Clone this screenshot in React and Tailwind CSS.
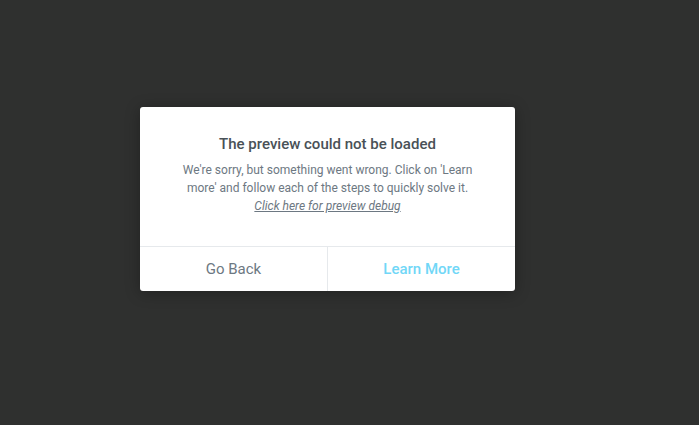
export default function App() {
  return (
    <div
      className="w-[699px] h-[425px] bg-[#2f302f] flex items-start pl-[140px] pt-[107px]"
      style={{ fontFamily: "Roboto, 'Liberation Sans', sans-serif" }}
    >
      <div className="w-[375px] bg-white rounded-[3px] shadow-[0_2px_15px_rgba(0,0,0,0.3)] overflow-hidden">
        <div className="px-[40px] pt-[27px] pb-[31px] text-center">
          <h2 className="text-[15px] leading-[20px] font-medium text-[#495157]">
            The preview could not be loaded
          </h2>
          <p className="mt-[7px] text-[12px] leading-[18px] text-[#6d7882]">
            We're sorry, but something went wrong. Click on 'Learn more' and
            follow each of the steps to quickly solve it.
            <br />
            <a href="#" className="italic underline text-[#6d7882]">
              Click here for preview debug
            </a>
          </p>
        </div>
        <div className="flex border-t border-[#e6e9ec] h-[45px]">
          <button className="flex-1 text-[15px] text-[#6d7882] border-r border-[#e6e9ec]">
            Go Back
          </button>
          <button className="flex-1 text-[15px] font-medium text-[#71d7f7]">
            Learn More
          </button>
        </div>
      </div>
    </div>
  );
}
